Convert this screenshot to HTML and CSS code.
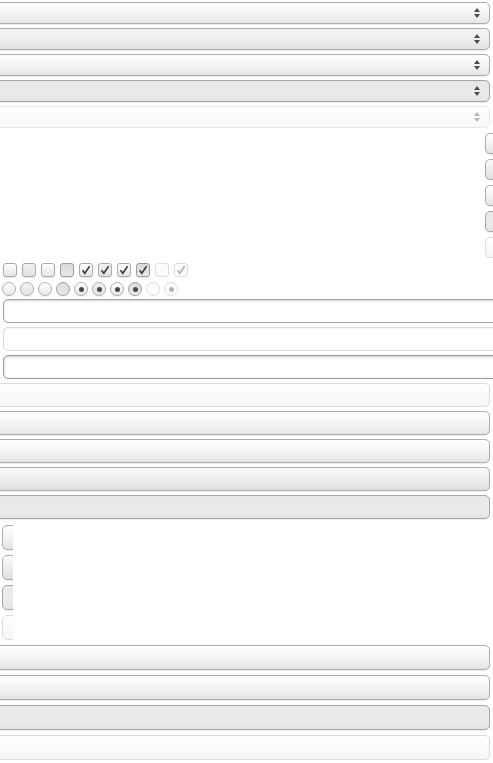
FILE: index.html
```html
<!DOCTYPE html>
<html lang="en">
<head>
    <meta charset="UTF-8">
    <meta name="viewport" content="width=device-width, initial-scale=1.0">
    <title>Form controls</title>
    <link rel="stylesheet" href="styles.css">
</head>
<body>
    <div class="page">
        <!-- selects -->
        <div class="selects">
            <div class="select-wrap">
                <select><option></option></select>
                <svg class="arrows" width="6" height="10" viewBox="0 0 6 10"><polygon points="0,4 3,0 6,4"/><polygon points="0,6 3,10 6,6"/></svg>
            </div>
            <div class="select-wrap hover">
                <select><option></option></select>
                <svg class="arrows" width="6" height="10" viewBox="0 0 6 10"><polygon points="0,4 3,0 6,4"/><polygon points="0,6 3,10 6,6"/></svg>
            </div>
            <div class="select-wrap">
                <select><option></option></select>
                <svg class="arrows" width="6" height="10" viewBox="0 0 6 10"><polygon points="0,4 3,0 6,4"/><polygon points="0,6 3,10 6,6"/></svg>
            </div>
            <div class="select-wrap active">
                <select><option></option></select>
                <svg class="arrows" width="6" height="10" viewBox="0 0 6 10"><polygon points="0,4 3,0 6,4"/><polygon points="0,6 3,10 6,6"/></svg>
            </div>
            <div class="select-wrap disabled">
                <select disabled><option></option></select>
                <svg class="arrows" width="6" height="10" viewBox="0 0 6 10"><polygon points="0,4 3,0 6,4"/><polygon points="0,6 3,10 6,6"/></svg>
            </div>
        </div>

        <!-- buttons at the right edge -->
        <div class="side-buttons">
            <button class="btn"></button>
            <button class="btn hover"></button>
            <button class="btn"></button>
            <button class="btn active"></button>
            <button class="btn disabled" disabled></button>
        </div>

        <!-- checkboxes -->
        <div class="checks">
            <span class="check"></span>
            <span class="check hover"></span>
            <span class="check"></span>
            <span class="check active"></span>
            <span class="check on"><svg width="10" height="10" viewBox="0 0 10 10"><path d="M1.5 5.2 L3.8 8.3 L8.6 1.2"/></svg></span>
            <span class="check on hover"><svg width="10" height="10" viewBox="0 0 10 10"><path d="M1.5 5.2 L3.8 8.3 L8.6 1.2"/></svg></span>
            <span class="check on"><svg width="10" height="10" viewBox="0 0 10 10"><path d="M1.5 5.2 L3.8 8.3 L8.6 1.2"/></svg></span>
            <span class="check on active"><svg width="10" height="10" viewBox="0 0 10 10"><path d="M1.5 5.2 L3.8 8.3 L8.6 1.2"/></svg></span>
            <span class="check disabled"></span>
            <span class="check on disabled"><svg width="10" height="10" viewBox="0 0 10 10"><path d="M1.5 5.2 L3.8 8.3 L8.6 1.2"/></svg></span>
        </div>

        <!-- radios -->
        <div class="radios">
            <span class="radio"></span>
            <span class="radio hover"></span>
            <span class="radio"></span>
            <span class="radio active"></span>
            <span class="radio on"></span>
            <span class="radio on hover"></span>
            <span class="radio on"></span>
            <span class="radio on active"></span>
            <span class="radio disabled"></span>
            <span class="radio on disabled"></span>
        </div>

        <!-- text fields -->
        <div class="fields">
            <input type="text" class="field">
            <input type="text" class="field disabled" disabled>
            <input type="text" class="field focus">
        </div>

        <!-- wide buttons -->
        <div class="wide-buttons">
            <button class="btn disabled" disabled></button>
            <button class="btn"></button>
            <button class="btn"></button>
            <button class="btn hover"></button>
            <button class="btn active"></button>
        </div>

        <!-- clipped buttons -->
        <div class="clip-buttons">
            <button class="btn"></button>
            <button class="btn hover"></button>
            <button class="btn active"></button>
            <button class="btn disabled" disabled></button>
        </div>

        <!-- bottom buttons -->
        <div class="bottom-buttons">
            <button class="btn"></button>
            <button class="btn"></button>
            <button class="btn active"></button>
            <button class="btn disabled" disabled></button>
        </div>
    </div>
</body>
</html>
```

FILE: styles.css
```css
html, body {
    margin: 0;
    background: #fff;
    overflow: hidden;
    font-family: "Liberation Sans", Arial, sans-serif;
}
.page {
    display: flex;
    flex-direction: column;
    padding-top: 2px;
}

/* common button look */
.btn {
    appearance: none;
    display: block;
    margin: 0;
    padding: 0;
    box-sizing: border-box;
    border: 1px solid #adadad;
    border-radius: 5px;
    background: linear-gradient(#ffffff 0%, #f6f6f6 45%, #e4e4e4 100%);
    box-shadow: 0 1px 1px rgba(0,0,0,0.08);
}
.btn.hover {
    background: linear-gradient(#fafafa 0%, #ededed 50%, #e0e0e0 100%);
}
.btn.active {
    border-color: #a6a6a6;
    background: linear-gradient(#e8e8e8 0%, #ececec 60%, #e4e4e4 100%);
}
.btn.disabled {
    border-color: #dcdcdc;
    background: linear-gradient(#ffffff, #f6f6f6);
    box-shadow: none;
}

/* selects */
.selects {
    display: flex;
    flex-direction: column;
    gap: 4px;
    margin-left: -10px;
    width: 500px;
}
.select-wrap {
    position: relative;
    height: 22px;
}
.select-wrap select {
    appearance: none;
    display: block;
    width: 100%;
    height: 22px;
    margin: 0;
    box-sizing: border-box;
    border: 1px solid #adadad;
    border-radius: 5px;
    background: linear-gradient(#ffffff 0%, #f5f5f5 50%, #e5e5e5 100%);
    box-shadow: 0 1px 1px rgba(0,0,0,0.08);
}
.select-wrap.hover select {
    background: linear-gradient(#f2f2f2 0%, #f0f0f0 40%, #e3e3e3 100%);
}
.select-wrap.active select {
    border-color: #a6a6a6;
    background: linear-gradient(#e6e6e6 0%, #ececec 60%, #e4e4e4 100%);
}
.select-wrap.disabled select {
    border-color: #dedede;
    background: linear-gradient(#ffffff, #f7f7f7);
    box-shadow: none;
}
.arrows {
    position: absolute;
    right: 10px;
    top: 6px;
    fill: #4b4b4b;
}
.select-wrap.disabled .arrows {
    fill: #b8b8b8;
}

/* buttons hanging off the right edge */
.side-buttons {
    display: flex;
    flex-direction: column;
    gap: 5px;
    margin-top: 5px;
    margin-left: 485px;
}
.side-buttons .btn {
    width: 40px;
    height: 21px;
}

/* checkboxes */
.checks {
    display: flex;
    gap: 5px;
    margin-top: 5px;
    padding-left: 3px;
}
.check {
    width: 14px;
    height: 14px;
    box-sizing: border-box;
    border: 1px solid #a9a9a9;
    border-radius: 3px;
    background: linear-gradient(#ffffff, #e6e6e6);
    box-shadow: 0 1px 1px rgba(0,0,0,0.08);
    display: flex;
    align-items: center;
    justify-content: center;
}
.check.hover {
    background: linear-gradient(#f2f2f2, #e2e2e2);
}
.check.active {
    border-color: #9c9c9c;
    background: linear-gradient(#dadada, #e8e8e8);
}
.check.disabled {
    border-color: #dcdcdc;
    background: #fbfbfb;
    box-shadow: none;
}
.check svg path {
    fill: none;
    stroke: #3c3c3c;
    stroke-width: 1.6;
}
.check.disabled svg path {
    stroke: #b0b0b0;
}

/* radios */
.radios {
    display: flex;
    gap: 4px;
    margin-top: 5px;
    padding-left: 2px;
}
.radio {
    width: 14px;
    height: 14px;
    box-sizing: border-box;
    border: 1px solid #b0b0b0;
    border-radius: 50%;
    background: linear-gradient(#ffffff, #e8e8e8);
    box-shadow: 0 1px 1px rgba(0,0,0,0.08);
    display: flex;
    align-items: center;
    justify-content: center;
}
.radio.hover {
    background: linear-gradient(#f2f2f2, #e3e3e3);
}
.radio.active {
    border-color: #a0a0a0;
    background: linear-gradient(#dcdcdc, #e9e9e9);
}
.radio.disabled {
    border-color: #dedede;
    background: #fcfcfc;
    box-shadow: none;
}
.radio.on::after {
    content: "";
    width: 5px;
    height: 5px;
    border-radius: 50%;
    background: #474747;
}
.radio.on.disabled::after {
    background: #b2b2b2;
}

/* text fields */
.fields {
    display: flex;
    flex-direction: column;
    gap: 4px;
    margin-top: 3px;
    margin-left: 3px;
    width: 540px;
}
.field {
    appearance: none;
    display: block;
    margin: 0;
    height: 24px;
    box-sizing: border-box;
    border: 1px solid #a3a3a3;
    border-radius: 5px;
    background: #fff;
    box-shadow: inset 0 1px 2px rgba(0,0,0,0.18);
}
.field.disabled {
    border-color: #d8d8d8;
    box-shadow: inset 0 1px 1px rgba(0,0,0,0.05);
}
.field.focus {
    border-color: #9a9a9a;
    box-shadow: inset 0 1px 3px rgba(0,0,0,0.22);
}

/* wide buttons */
.wide-buttons {
    display: flex;
    flex-direction: column;
    gap: 4px;
    margin-top: 4px;
    margin-left: -10px;
    width: 500px;
}
.wide-buttons .btn {
    width: 100%;
    height: 24px;
}

/* buttons clipped at the left */
.clip-buttons {
    display: flex;
    flex-direction: column;
    gap: 5px;
    margin-top: 6px;
    margin-left: 2px;
    width: 11px;
    overflow: hidden;
}
.clip-buttons .btn {
    width: 40px;
    height: 25px;
    flex-shrink: 0;
}

/* bottom buttons */
.bottom-buttons {
    display: flex;
    flex-direction: column;
    gap: 5px;
    margin-top: 5px;
    margin-left: -10px;
    width: 500px;
}
.bottom-buttons .btn {
    width: 100%;
    height: 25px;
}
```
